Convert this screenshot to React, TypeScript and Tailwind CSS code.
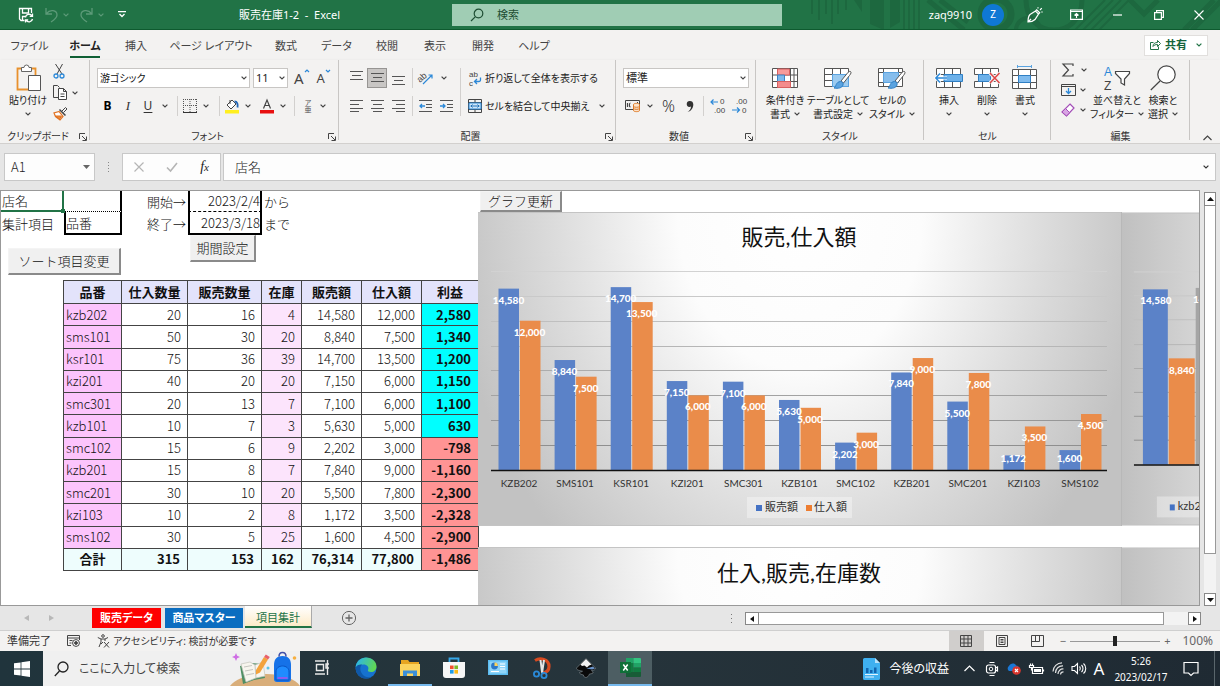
import React from "react";

type Kids = { children?: React.ReactNode };

function Icon({ w, h, className = "", children }: Kids & { w: number; h: number; className?: string }) {
  return (
    <svg width={w} height={h} viewBox={`0 0 ${w} ${h}`} fill="none" stroke="#444" strokeWidth="1" className={`shrink-0 overflow-visible ${className}`} aria-hidden="true">
      {children}
    </svg>
  );
}

function Chev({ className = "text-[#444]" }: { className?: string }) {
  return (
    <svg width="6" height="4" viewBox="0 0 6 4" fill="none" stroke="currentColor" strokeWidth="1.2" className={`shrink-0 ${className}`} aria-hidden="true">
      <path d="M.6.6 3 3 5.4.6" />
    </svg>
  );
}

function Slot({ w, label, children, on }: Kids & { w: string; label: string; on?: boolean }) {
  return (
    <button type="button" aria-label={label} className={`flex h-5 shrink-0 items-center justify-center ${w} ${on ? "border border-[#979593] bg-[#c8c6c4]" : ""}`}>
      {children}
    </button>
  );
}

function Sep({ w }: { w: string }) {
  return (
    <span className={`flex h-5 shrink-0 justify-center ${w}`}>
      <span className="h-full w-px bg-[#d2d0ce]" />
    </span>
  );
}

function Group({ w, title, launcher, children }: Kids & { w: string; title: string; launcher?: boolean }) {
  return (
    <section className={`relative flex shrink-0 flex-col ${w}`}>
      <div className="h-[69px]">{children}</div>
      <div className={`flex h-[14px] items-center justify-center text-[10px] leading-[14px] text-[#333] ${launcher ? "pr-[14px]" : ""}`}>{title}</div>
      {launcher && (
        <button type="button" aria-label={`${title}の設定`} className="absolute right-[3px] bottom-[2px]">
          <Icon w={8} h={8}>
            <path d="M.5 6V.5H6M3 3l4 4M7.500 3.500v4h-4" />
          </Icon>
        </button>
      )}
      <span className="absolute top-0 right-0 h-20 w-px bg-[#c8c6c4]" />
    </section>
  );
}

function Big({ w, icon, lines, chev }: { w: string; icon: React.ReactNode; lines: string[]; chev?: boolean }) {
  return (
    <button type="button" className={`flex shrink-0 flex-col items-center text-[10px] leading-[14px] text-[#222] ${w}`}>
      <span className="flex h-[30px] items-center justify-center">{icon}</span>
      <span className="whitespace-nowrap">{lines[0]}</span>
      {lines[1] ? (
        <span className="flex items-center gap-1 whitespace-nowrap">
          {lines[1]}
          <Chev />
        </span>
      ) : (
        chev && (
          <span className="flex h-[14px] items-center">
            <Chev />
          </span>
        )
      )}
    </button>
  );
}

/* ---------- title bar ---------- */

function TitleBar() {
  return (
    <header className="relative flex h-[30px] shrink-0 items-center overflow-hidden border-b border-[#0e5a2f] bg-[#217346] text-white">
      <svg className="absolute top-0 right-0 h-[30px] w-[420px]" viewBox="0 0 420 30" aria-hidden="true">
        <g fill="none" stroke="#1d683f" strokeWidth="2">
          <path d="M12 0v14M19 0v20M26 0v14M32 0v24M38 0v14M46 0v10" />
          <path d="M104 0v30M109 0v30M114 0v30M119 0v30" />
          <path d="M128 0l36 30M140 0l28 22" strokeWidth="5" />
          <circle cx="196" cy="14" r="15" strokeWidth="7" />
          <circle cx="228" cy="30" r="12" strokeWidth="4" />
          <path d="M275 30l30-30M283 30l30-30M291 30l30-30M299 30l30-30" />
          <path d="M226 0c0 40 56 40 56 0" strokeWidth="5" />
          <path d="M330 0l14 14 14-14M384 30l30-30M392 30l30-30" strokeWidth="5" />
        </g>
        <path d="M54 0h8v12zM70 0h14v30l-14-6zM90 0h10v22l-10 6z" fill="#1d683f" />
      </svg>
      <button type="button" aria-label="上書き保存" className="ml-[18px]">
        <Icon w={16} h={16}>
          <g stroke="#fff" strokeWidth="1.300">
            <path d="M6.500 13.500H3L1.500 12V1.500h12V6M4.500 1.500v4.500h6V1.500M4.500 13.500V9.500h2.500" />
            <path d="M7.500 10.500a3.500 3.500 0 0 1 6.500-1.500M14.500 6.500V9.300h-2.800M14.500 12a3.500 3.500 0 0 1-6.500 1M7.500 15.500v-2.700h2.700" />
          </g>
        </Icon>
      </button>
      <button type="button" aria-label="元に戻す" className="ml-[10px] flex items-center gap-1">
        <Icon w={15} h={16}>
          <path d="M2 1v6h6M2.500 6.500C6 2 13 3 13 8c0 3-3 5-6 7" stroke="#5c9a78" strokeWidth="1.300" />
        </Icon>
        <Chev className="text-[#5c9a78]" />
      </button>
      <button type="button" aria-label="やり直し" className="ml-[10px] flex items-center gap-1">
        <Icon w={15} h={16}>
          <path d="M13 1v6H7M12.500 6.500C9 2 2 3 2 8c0 3 3 5 6 7" stroke="#5c9a78" strokeWidth="1.300" />
        </Icon>
        <Chev className="text-[#5c9a78]" />
      </button>
      <button type="button" aria-label="クイック アクセス" className="ml-[14px]">
        <Icon w={8} h={7}>
          <path d="M0 .7h8M1.500 3 4 5.500 6.500 3" stroke="#fff" strokeWidth="1.300" />
        </Icon>
      </button>
      <h1 className="ml-[113px] w-[213px] text-[11px] leading-4 whitespace-pre">販売在庫1-2  -  Excel</h1>
      <label className="flex h-[22px] w-[330px] items-center gap-[13px] bg-[#a0cdb4] pl-[18px]">
        <Icon w={14} h={14}>
          <path d="M5.200 8.800 1 13" stroke="#1e4e33" strokeWidth="1.200" />
          <circle cx="8.500" cy="5.500" r="4.300" stroke="#1e4e33" strokeWidth="1.200" />
        </Icon>
        <input aria-label="検索" placeholder="検索" className="w-full bg-transparent text-[11px] leading-4 text-[#1e4e33] outline-none placeholder:text-[#1e4e33]" />
      </label>
      <div className="relative ml-auto flex items-center">
        <span className="mr-[10px] text-[11px] leading-4">zaq9910</span>
        <span className="flex size-[22px] items-center justify-center rounded-full bg-[#0f78d4] text-[10px]">Z</span>
        <button type="button" aria-label="描画" className="ml-[23px]">
          <Icon w={16} h={16}>
            <path d="M1 15c0-3.500.5-6 2-7.500L8.500 4l3 3L8 12.500C6.500 14 4 15 1 15zM1 15l3-3M8.500 4l1.200-1.200 3 3L11.500 7M11 1.500V.3M13 3l1.800-1.800M14.300 5h1.400" stroke="#fff" strokeWidth="1.200" />
          </Icon>
        </button>
        <button type="button" aria-label="リボンの表示オプション" className="ml-[27px]">
          <Icon w={13} h={11}>
            <path d="M.6 1h11.800v9.400H.6zM.6 2.500h11.800M6.500 9V5M4.500 6.500l2-2 2 2" stroke="#fff" strokeWidth="1.200" />
          </Icon>
        </button>
        <button type="button" aria-label="最小化" className="ml-[30px]">
          <Icon w={10} h={10}>
            <path d="M0 5h9" stroke="#fff" strokeWidth="1.200" />
          </Icon>
        </button>
        <button type="button" aria-label="元のサイズに戻す" className="ml-[31px]">
          <Icon w={10} h={10}>
            <path d="M.6 2.600h6.800v6.800H.6zM2.600 2.500V.6h6.800v6.800H7.500" stroke="#fff" strokeWidth="1.200" />
          </Icon>
        </button>
        <button type="button" aria-label="閉じる" className="mr-4 ml-[30px]">
          <Icon w={10} h={10}>
            <path d="m.5.500 9 9m0-9-9 9" stroke="#fff" strokeWidth="1.100" />
          </Icon>
        </button>
      </div>
    </header>
  );
}

const menu = [
  { t: "ファイル", w: "w-[33px]" },
  { t: "ホーム", w: "w-[30px]", on: true },
  { t: "挿入", w: "w-6" },
  { t: "ページ レイアウト", w: "w-[78px]" },
  { t: "数式", w: "w-6" },
  { t: "データ", w: "w-[29px]" },
  { t: "校閲", w: "w-6" },
  { t: "表示", w: "w-6" },
  { t: "開発", w: "w-6" },
  { t: "ヘルプ", w: "w-[30px]" },
];

function MenuTabs() {
  return (
    <nav className="flex h-[30px] shrink-0 items-center gap-6 pr-3 pl-[13px]">
      {menu.map((m) => (
        <button key={m.t} type="button" className={`flex h-[25px] shrink-0 justify-center pt-[5px] text-[11px] leading-4 whitespace-nowrap ${m.w} ${m.on ? "border-b-2 border-[#0f5f34] font-bold text-[#222]" : "border-b-2 border-transparent text-[#444]"}`}>
          {m.t}
        </button>
      ))}
      <button type="button" className="ml-auto flex h-[21px] items-center gap-1 border border-[#e1dfdd] bg-white px-[5px] text-[11px] leading-4 font-bold text-[#14633a]">
        <Icon w={11} h={10}>
          <path d="M3.500 2.500H.5v7h8v-3M3 6.500c0-3 2-4 4.500-4V.5l3 3-3 3v-2c-2 0-3.500.5-4.500 2z" stroke="#217346" />
        </Icon>
        共有
        <Chev className="ml-[5px] text-[#217346]" />
      </button>
    </nav>
  );
}

/* ---------- ribbon ---------- */

function Lines({ ys, xs }: { ys: number[]; xs: [number, number][] }) {
  return (
    <Icon w={13} h={14}>
      {ys.map((y, i) => (
        <path key={y} d={`M${xs[i][0]} ${y}.5H${xs[i][1]}`} stroke="#555" />
      ))}
    </Icon>
  );
}

const full: [number, number] = [0, 13];
const glyph = "font-['Liberation_Sans',sans-serif]";

function Brush() {
  return (
    <>
      <path d="M26.500 5.500c1 .8.500 2-1 4l-6 7.500-2.500-2 6.500-8c1.200-1.300 2.200-2 3-1.500z" fill="#fff" stroke="#555" />
      <path d="M16.500 15.500c2 .2 3 1.500 2.500 3.500-.8 3-5 3.800-9 3 2.500-1.500 1.500-6 6.500-6.500z" fill="#5aa3e0" stroke="#2f7fc4" />
    </>
  );
}

function Ribbon() {
  return (
    <div className="flex h-[84px] shrink-0 border-b border-[#d2d0ce] shadow-sm">
      <Group w="w-[90px]" title="クリップボード" launcher>
        <div className="flex gap-1 pl-[9px]">
          <button type="button" className="flex w-[38px] flex-col items-center pt-1 text-[10px] leading-4 whitespace-nowrap text-[#222]">
            <Icon w={25} h={28}>
              <path d="M5.500 4.500h-4v21H13M15.500 4.500h4V11" stroke="#e8912d" strokeWidth="1.800" />
              <path d="M5.500 3.500H8a2.500 2.500 0 0 1 5 0h2.500v4h-10z" fill="#fff" stroke="#666" />
              <path d="M12.500 11.500h12v15h-12z" fill="#fff" stroke="#555" />
            </Icon>
            貼り付け
            <Chev className="mt-1 text-[#444]" />
          </button>
          <div className="flex flex-col gap-[6px] pt-1 pl-[2px]">
            <button type="button" aria-label="切り取り">
              <Icon w={14} h={15}>
                <path d="M2.500 0 9 10M9.500 0 4 10" />
                <circle cx="3" cy="12" r="2" stroke="#2b88d8" strokeWidth="1.300" />
                <circle cx="9" cy="12" r="2" stroke="#2b88d8" strokeWidth="1.300" />
              </Icon>
            </button>
            <button type="button" aria-label="コピー" className="flex items-center gap-[5px]">
              <Icon w={14} h={15}>
                <path d="M5 12.500H.5v-12h4l2 2" />
                <path d="M5.500 3.500h5l3 3v8h-8zM10.500 3.500v3h3M7.500 9h4M7.500 11.500h4" fill="#fff" />
              </Icon>
              <Chev />
            </button>
            <button type="button" aria-label="書式のコピー">
              <Icon w={15} h={15}>
                <path d="m9 5 3.500-3.500 1.500 1.500L10.500 6.500" stroke="#444" />
                <path d="m6.500 3.500 6 6" strokeWidth="1.500" />
                <path d="M6 5.500 1 7l1.500 3.500L7 14l3-3.500z" fill="#fff" stroke="#e07020" strokeWidth="1.200" />
                <path d="m2.500 10 4 3 2-3z" fill="#ec8b3a" stroke="#e07020" />
              </Icon>
            </button>
          </div>
        </div>
      </Group>

      <Group w="w-[249px]" title="フォント" launcher>
        <div className="flex items-center pt-2 pl-[7px]">
          <button type="button" aria-label="フォント" className="flex h-5 w-[153px] items-center justify-between border border-[#c8c6c4] bg-white px-[2px] text-[10px] leading-4 text-[#111]">
            游ゴシック
            <Chev />
          </button>
          <button type="button" aria-label="フォント サイズ" className="ml-[3px] flex h-5 w-[35px] items-center justify-between border border-[#c8c6c4] bg-white px-[2px] text-[11px] leading-4 text-[#222]">
            11
            <Chev />
          </button>
          <button type="button" className="ml-[6px] flex text-[15px] leading-5 text-[#444]">
            A
            <Icon w={6} h={6}>
              <path d="M1 4 3 2l2 2" stroke="#2b88d8" strokeWidth="1.200" />
            </Icon>
          </button>
          <button type="button" className="ml-[7px] flex text-[13px] leading-5 text-[#444]">
            A
            <Icon w={6} h={6}>
              <path d="m1 2 2 2 2-2" stroke="#2b88d8" strokeWidth="1.200" />
            </Icon>
          </button>
        </div>
        <div className="flex items-center pt-2 pl-[7px] text-[12px] leading-4 text-[#333]">
          <Slot w="w-[21px]" label="太字"><b className="text-black">B</b></Slot>
          <Slot w="w-5" label="斜体"><i className="font-['Liberation_Serif',serif] text-[13px]">I</i></Slot>
          <Slot w="w-5" label="下線"><u className="underline-offset-2">U</u></Slot>
          <Slot w="w-[14px]" label="下線の種類"><Chev /></Slot>
          <Sep w="w-[10px]" />
          <Slot w="w-4" label="罫線">
            <Icon w={14} h={14}>
              <path d="M.5 0v13M13.500 0v13M0 .5h14M7 0v13M0 6.500h14" strokeDasharray="1 1" stroke="#555" />
              <path d="M0 13.500h14" stroke="#333" />
            </Icon>
          </Slot>
          <Slot w="w-4" label="罫線の種類"><Chev /></Slot>
          <Sep w="w-[10px]" />
          <Slot w="w-4" label="塗りつぶしの色">
            <Icon w={15} h={15}>
              <path d="M0 11h14v3.500H0z" fill="#ffef1f" stroke="none" />
              <path d="M7 1 2 6l4 4 5-5L7 1zM5 1v4" fill="#fff" />
              <path d="M9.500 2.500c3 0 3.500 3 3 6" stroke="#2266b8" strokeWidth="1.800" />
            </Icon>
          </Slot>
          <Slot w="w-4" label="塗りつぶしの色の種類"><Chev /></Slot>
          <Slot w="w-[22px]" label="フォントの色">
            <Icon w={15} h={15}>
              <path d="M0 11h14v3.500H0z" fill="#e81010" stroke="none" />
              <path d="M3.500 9.500 7 1l3.500 8.500M4.800 6.500h4.400" strokeWidth="1.200" />
            </Icon>
          </Slot>
          <Slot w="w-[10px]" label="フォントの色の種類"><Chev /></Slot>
          <Sep w="w-3" />
          <Slot w="w-4" label="ふりがな">
            <span className="flex flex-col items-center text-[7px] leading-[7px] text-[#555]">
              <span>ア</span>
              <span>亜</span>
            </span>
          </Slot>
          <Slot w="w-[14px]" label="ふりがなの設定"><Chev /></Slot>
        </div>
      </Group>

      <Group w="w-[277px]" title="配置" launcher>
        <div className="flex pt-2">
          <div className="flex w-[122px] flex-col gap-2 border-r border-[#d2d0ce] pl-[6px]">
            <div className="flex items-center">
              <Slot w="w-[22px]" label="上揃え"><Lines ys={[0, 4, 8]} xs={[full, [2, 11], full]} /></Slot>
              <Slot w="w-5" label="上下中央揃え" on><Lines ys={[2, 6, 10]} xs={[full, [2, 11], full]} /></Slot>
              <Slot w="w-[22px]" label="下揃え"><Lines ys={[5, 9, 13]} xs={[full, [2, 11], full]} /></Slot>
              <Sep w="w-[6px]" />
              <Slot w="w-[22px]" label="方向">
                <Icon w={16} h={14}>
                  <text x="0" y="9" fontSize="9" fill="#444" stroke="none" className={glyph} transform="rotate(-42 5 8)">ab</text>
                  <path d="M5 13 14 4M10.500 4H14v3.500" stroke="#2b88d8" strokeWidth="1.200" />
                </Icon>
              </Slot>
              <Slot w="w-[14px]" label="方向の種類"><Chev /></Slot>
            </div>
            <div className="flex items-center">
              <Slot w="w-[22px]" label="左揃え"><Lines ys={[1, 5, 9, 12]} xs={[full, [0, 9], full, [0, 9]]} /></Slot>
              <Slot w="w-5" label="中央揃え"><Lines ys={[1, 5, 9, 12]} xs={[full, [2, 11], full, [2, 11]]} /></Slot>
              <Slot w="w-[22px]" label="右揃え"><Lines ys={[1, 5, 9, 12]} xs={[full, [4, 13], full, [4, 13]]} /></Slot>
              <Sep w="w-[6px]" />
              <Slot w="w-[22px]" label="インデントを減らす">
                <Icon w={14} h={14}>
                  <path d="M0 1.500h13M7 5.500h6M7 8.500h6M0 12.500h13" stroke="#555" />
                  <path d="M6 7H1M3 5 1 7l2 2" stroke="#2b88d8" strokeWidth="1.300" />
                </Icon>
              </Slot>
              <Slot w="w-5" label="インデントを増やす">
                <Icon w={14} h={14}>
                  <path d="M0 1.500h13M7 5.500h6M7 8.500h6M0 12.500h13" stroke="#555" />
                  <path d="M0 7h5M3 5l2 2-2 2" stroke="#2b88d8" strokeWidth="1.300" />
                </Icon>
              </Slot>
            </div>
          </div>
          <div className="flex flex-col gap-2 pl-[7px] text-[10px] leading-4 whitespace-nowrap text-[#222]">
            <button type="button" className="flex h-5 items-center gap-[3px]">
              <Icon w={14} h={16}>
                <text x="1" y="7" fontSize="8" fill="#444" stroke="none" className={glyph}>ab</text>
                <text x="1" y="16" fontSize="8" fill="#444" stroke="none" className={glyph}>c</text>
                <path d="M12.500 7.500V10a1.500 1.500 0 0 1-1.500 1.500H6.500M9 9l-2.500 2.500L9 14" stroke="#2b88d8" strokeWidth="1.300" />
              </Icon>
              折り返して全体を表示する
            </button>
            <button type="button" className="flex h-5 items-center gap-[3px]">
              <Icon w={14} h={14}>
                <path d="M.5.500h13v13H.5zM.5 3.500h13M.5 10.500h13M7 .5v3M7 10.500v3" stroke="#444" />
                <path d="M1 4h12v6H1z" fill="#cfe6f8" stroke="#2b88d8" />
                <path d="M2.500 7h9M4.500 5.500 3 7l1.500 1.500M9.500 5.500 11 7 9.500 8.500" stroke="#2070b8" />
              </Icon>
              セルを結合して中央揃え
              <Chev className="ml-[6px] text-[#444]" />
            </button>
          </div>
        </div>
      </Group>

      <Group w="w-[140px]" title="数値" launcher>
        <div className="pt-2 pl-[7px]">
          <button type="button" aria-label="表示形式" className="flex h-5 w-[126px] items-center justify-between border border-[#c8c6c4] bg-white px-[2px] text-[11px] leading-4 text-[#222]">
            標準
            <Chev />
          </button>
        </div>
        <div className="flex items-center pt-2 pl-[7px]">
          <Slot w="w-5" label="通貨表示形式">
            <Icon w={16} h={14}>
              <path d="M.5 1.500h14v9H.5z" />
              <path d="M2.500 4v4M5.500 4C4 4 4 8 5.500 8M12 3.500h1" strokeWidth="1.200" />
              <path d="M8.500 5.500c0-1.500 6-1.500 6 0v6c0 1.500-6 1.500-6 0zM8.500 7.500c1 1 5 1 6 0M8.500 9.500c1 1 5 1 6 0" fill="#fde3c8" stroke="#e07a26" />
            </Icon>
          </Slot>
          <Slot w="w-[14px]" label="通貨の種類"><Chev /></Slot>
          <Slot w="w-[23px]" label="パーセント"><span className="text-[16px] leading-5 font-light text-[#333]">%</span></Slot>
          <Slot w="w-[20px]" label="桁区切り">
            <Icon w={8} h={13}>
              <path d="M4 1a3 3 0 0 0-.5 6c.8 0 1.200-.2 1.500-.5C5 9 3.500 11 1.500 12c4-.8 5.800-4.500 5.800-7.500C7.300 2 5.800 1 4 1z" fill="#333" stroke="none" />
            </Icon>
          </Slot>
          <Sep w="w-[6px]" />
          <Slot w="w-[22px]" label="小数点以下を増やす">
            <Icon w={15} h={16}>
              <text x="10" y="6" fontSize="8" fill="#444" stroke="none" className={glyph}>0</text>
              <text x="4" y="15" fontSize="8" fill="#444" stroke="none" className={glyph}>.00</text>
              <path d="M8 4H1M3.500 1.500 1 4l2.500 2.500" stroke="#2b88d8" strokeWidth="1.200" />
            </Icon>
          </Slot>
          <Slot w="w-[22px]" label="小数点以下を減らす">
            <Icon w={15} h={16}>
              <text x="4" y="6" fontSize="8" fill="#444" stroke="none" className={glyph}>.00</text>
              <text x="10" y="15" fontSize="8" fill="#444" stroke="none" className={glyph}>0</text>
              <path d="M0 12h7.500M5 9.500 7.500 12 5 14.500" stroke="#2b88d8" strokeWidth="1.200" />
            </Icon>
          </Slot>
        </div>
      </Group>

      <Group w="w-[168px]" title="スタイル">
        <div className="flex pt-[3px] pl-[7px]">
          <Big
            w="w-11"
            lines={["条件付き", "書式"]}
            icon={
              <Icon w={26} h={22}>
                <path d="M.5 1.500h25v19H.5zM5.500 1.500v19M18.500 1.500v19M.5 8h25M.5 14.500h25M22 1.500v19" fill="#fff" stroke="#555" />
                <path d="M5.500 2h12v6h-12z" fill="#f79a9a" stroke="#d86060" />
                <path d="M5.500 8h7v6.500h-7z" fill="#7db8ea" stroke="#3a82c4" />
                <path d="M5.500 14.500h13v6h-13z" fill="#f48c8c" stroke="#d86060" />
              </Icon>
            }
          />
          <Big
            w="w-[62px]"
            lines={["テーブルとして", "書式設定"]}
            icon={
              <Icon w={28} h={24}>
                <path d="M.5 2.500h24v18H.5zM8.500 2.500v18M16.500 2.500v18M.5 8.500h24M.5 14.500h24" fill="#fff" stroke="#555" />
                <path d="M8.500 8.500h16v12h-16z" fill="#9ccbf0" stroke="#5aa3e0" />
                <Brush />
              </Icon>
            }
          />
          <Big
            w="w-[46px]"
            lines={["セルの", "スタイル"]}
            icon={
              <Icon w={28} h={24}>
                <path d="M.5 2.500h24v18H.5zM5.500 2.500v18M20.500 2.500v4M.5 6.500h24M.5 16.500h6" fill="#fff" stroke="#555" />
                <path d="M5.500 6.500h15v10h-15z" fill="#86bdec" stroke="#5aa3e0" />
                <Brush />
              </Icon>
            }
          />
        </div>
      </Group>

      <Group w="w-[127px]" title="セル">
        <div className="flex pt-[3px] pl-[6px]">
          <Big
            w="w-[38px]"
            lines={["挿入"]}
            chev
            icon={
              <Icon w={28} h={22}>
                <path d="M1.500 1.500h24v19h-24zM9.500 1.500v19M17.500 1.500v19M1.500 7.500h24M1.500 14.500h24" fill="#fff" stroke="#555" />
                <path d="M9 7.500h18.500v7H9z" fill="#6db1ea" stroke="#2f7fc4" />
                <path d="M12 11H1M5 6.500.8 11 5 15.500" stroke="#fff" strokeWidth="3" />
                <path d="M12 11H1M5 6.500.8 11 5 15.500" stroke="#2b88d8" strokeWidth="1.400" />
              </Icon>
            }
          />
          <Big
            w="w-[38px]"
            lines={["削除"]}
            chev
            icon={
              <Icon w={28} h={22}>
                <path d="M1.500 1.500h24v6h-24zM1.500 14.500h24v6h-24zM9.500 1.500v6M17.500 1.500v6M9.500 14.500v6M17.500 14.500v6" fill="#fff" stroke="#555" />
                <path d="M5.500 7.500h12v7h-12z" fill="#6db1ea" stroke="#2f7fc4" />
                <path d="m17 6 9.500 10m0-10L17 16" stroke="#f3f2f1" strokeWidth="3.500" />
                <path d="m17 6 9.500 10m0-10L17 16" stroke="#e04646" strokeWidth="1.500" />
              </Icon>
            }
          />
          <Big
            w="w-[38px]"
            lines={["書式"]}
            chev
            icon={
              <Icon w={26} h={26}>
                <path d="M5.500 0v3M19.500 0v3M5.500 1.500h14" stroke="#5aa3e0" />
                <path d="M.5 4.500h24v19H.5zM6.500 4.500v19M18.500 4.500v19M.5 10.500h24M.5 17.500h24" fill="#fff" stroke="#555" />
                <path d="M6.500 10.500h12v7h-12z" fill="#7fbbee" stroke="#2f7fc4" />
              </Icon>
            }
          />
        </div>
      </Group>

      <Group w="w-[139px]" title="編集">
        <div className="flex">
          <div className="flex w-[41px] flex-col pl-[10px]">
            <button type="button" aria-label="オート SUM" className="flex h-5 items-center gap-[6px]">
              <Icon w={14} h={14}>
                <path d="M12 3V1H2l5.500 6L2 13h10v-2" strokeWidth="1.200" />
              </Icon>
              <Chev />
            </button>
            <button type="button" aria-label="フィル" className="flex h-5 items-center gap-[4px]">
              <Icon w={15} h={12}>
                <path d="M.5.500h14v11H.5zM.5 2.500h14" />
                <path d="M7.500 4v5.500M5 7l2.500 2.500L10 7" stroke="#2b88d8" strokeWidth="1.300" />
              </Icon>
              <Chev />
            </button>
            <button type="button" aria-label="クリア" className="flex h-5 items-center gap-[5px]">
              <Icon w={14} h={14}>
                <path d="m9 1 4 4-7.500 8L1 9z" fill="#fff" stroke="#a44fb8" strokeWidth="1.200" />
                <path d="m4.500 5.500 4.200 4.200L5.500 13 1 9z" fill="#d9a5e4" stroke="#a44fb8" />
              </Icon>
              <Chev />
            </button>
          </div>
          <div className="flex pt-[3px]">
            <Big
              w="w-[50px]"
              lines={["並べ替えと", "フィルター"]}
              icon={
                <Icon w={26} h={26}>
                  <text x="0" y="11" fontSize="12" fill="#2b88d8" stroke="none" className={glyph}>A</text>
                  <text x="0" y="25" fontSize="12" fill="#444" stroke="none" className={glyph}>Z</text>
                  <path d="M11.500 6.500h14v2l-5 5.500v6l-3.500-2v-4l-5.500-5.500z" fill="#fff" strokeWidth="1.200" />
                </Icon>
              }
            />
            <Big
              w="w-[42px]"
              lines={["検索と", "選択"]}
              icon={
                <Icon w={26} h={26}>
                  <path d="M10 16 .8 25" strokeWidth="1.200" />
                  <circle cx="16.500" cy="9.500" r="8.700" fill="#fff" strokeWidth="1.200" />
                </Icon>
              }
            />
          </div>
        </div>
      </Group>
      <button type="button" aria-label="リボンを折りたたむ" className="mr-2 mb-[2px] ml-auto self-end">
        <Icon w={9} h={6}>
          <path d="M.5 5 4.500 1l4 4" strokeWidth="1.200" />
        </Icon>
      </button>
    </div>
  );
}

/* ---------- formula bar ---------- */

function FormulaBar() {
  return (
    <div className="flex h-[46px] shrink-0 items-center bg-[#e6e6e6] pr-1 pb-[1px] pl-1">
      <button type="button" aria-label="名前ボックス" className="flex h-7 w-[91px] items-center justify-between border border-[#c8c8c8] bg-[#fdfdfd] pr-1 pl-[6px] font-['Noto_Sans_CJK_JP',sans-serif] text-[13px] leading-4 font-light text-[#222]">
        A1
        <Icon w={7} h={4}>
          <path d="M0 0h7L3.500 4z" fill="#666" stroke="none" />
        </Icon>
      </button>
      <span className="flex w-[27px] flex-col items-center gap-[2px]">
        <i className="size-px bg-[#888]" />
        <i className="size-px bg-[#888]" />
        <i className="size-px bg-[#888]" />
        <i className="size-px bg-[#888]" />
      </span>
      <div className="flex h-7 w-[99px] items-center justify-around border border-[#c8c8c8] bg-[#fdfdfd]">
        <button type="button" aria-label="キャンセル">
          <Icon w={10} h={10}>
            <path d="m.5.500 9 9m0-9-9 9" stroke="#b5b5b5" strokeWidth="1.200" />
          </Icon>
        </button>
        <button type="button" aria-label="入力">
          <Icon w={12} h={10}>
            <path d="m1 5.500 3.500 3.500L11 1" stroke="#b5b5b5" strokeWidth="1.600" />
          </Icon>
        </button>
        <button type="button" className="font-['Liberation_Serif',serif] text-[14px] leading-4 text-[#222] italic">
          f<span className="text-[11px]">x</span>
        </button>
      </div>
      <label className="ml-[2px] flex h-7 flex-1 items-center border border-[#c8c8c8] bg-[#fdfdfd] pr-[6px] pl-[11px]">
        <input aria-label="数式バー" defaultValue="店名" className="w-full bg-transparent text-[13px] leading-4 font-light text-[#222] outline-none" />
        <Chev className="text-[#333]" />
      </label>
    </div>
  );
}

/* ---------- worksheet ---------- */

const rows: string[][] = [
  ["kzb202", "20", "16", "4", "14,580", "12,000", "2,580"],
  ["sms101", "50", "30", "20", "8,840", "7,500", "1,340"],
  ["ksr101", "75", "36", "39", "14,700", "13,500", "1,200"],
  ["kzi201", "40", "20", "20", "7,150", "6,000", "1,150"],
  ["smc301", "20", "13", "7", "7,100", "6,000", "1,100"],
  ["kzb101", "10", "7", "3", "5,630", "5,000", "630"],
  ["smc102", "15", "6", "9", "2,202", "3,000", "-798"],
  ["kzb201", "15", "8", "7", "7,840", "9,000", "-1,160"],
  ["smc201", "30", "10", "20", "5,500", "7,800", "-2,300"],
  ["kzi103", "10", "2", "8", "1,172", "3,500", "-2,328"],
  ["sms102", "30", "5", "25", "1,600", "4,500", "-2,900"],
];

const profit = (v: string) => (v.startsWith("-") ? "bg-[#ff9494]" : "bg-[#00ffff]");

function SheetButton({ pos, children }: Kids & { pos: string }) {
  return (
    <button type="button" className={`absolute flex items-center justify-center border-t border-r-2 border-b-2 border-l border-t-[#f4f4f4] border-r-[#8a8a8a] border-b-[#8a8a8a] border-l-[#f4f4f4] bg-[#f0f0f0] font-['Noto_Sans_CJK_JP',sans-serif] text-[13px] leading-4 font-light whitespace-nowrap text-[#111] [font-feature-settings:normal] ${pos}`}>
      {children}
    </button>
  );
}

function SheetCells() {
  const cell = "border border-[#444] px-[6px] py-0 text-right font-light text-[#111]";
  const top = "flex items-center whitespace-nowrap";
  return (
    <div className="relative w-[478px] shrink-0 border-l border-[#999] font-['Noto_Sans_CJK_JP',sans-serif] text-[13px] leading-4 font-light text-[#111] [font-feature-settings:normal]">
      <div className="grid grid-cols-[63px_58px_66px_74px_1fr] grid-rows-[21px_23px]">
        <div className={`relative border-2 border-t-0 border-l-0 border-[#217346] pl-px ${top}`}>
          店名
          <i className="absolute -right-[3px] -bottom-[3px] size-1 bg-[#217346]" />
        </div>
        <div className="border-r-2 border-b border-black [border-bottom-style:dotted]" />
        <div className={`justify-end pr-[2px] ${top}`}>開始→</div>
        <div className={`justify-end border-x-2 border-b border-black [border-bottom-style:dashed] ${top}`}>2023/2/4</div>
        <div className={`pl-[2px] ${top}`}>から</div>
        <div className={`pl-px ${top}`}>集計項目</div>
        <div className={`border-2 border-t-0 border-black ${top}`}>品番</div>
        <div className={`justify-end pr-[2px] ${top}`}>終了→</div>
        <div className={`justify-end border-2 border-t-0 border-black ${top}`}>2023/3/18</div>
        <div className={`pl-[2px] ${top}`}>まで</div>
      </div>
      <SheetButton pos="top-[44px] left-[189px] h-[27px] w-[66px]">期間設定</SheetButton>
      <SheetButton pos="top-[57px] left-[7px] h-[27px] w-[113px]">ソート項目変更</SheetButton>
      <table className="mt-[45px] ml-[62px] h-[291px] w-[416px] table-fixed border-collapse">
        <colgroup>
          <col className="w-[58px]" />
          <col className="w-[66px]" />
          <col className="w-[74px]" />
          <col className="w-10" />
          <col className="w-[60px]" />
          <col className="w-[60px]" />
          <col className="w-[57px]" />
        </colgroup>
        <thead>
          <tr className="h-[23px] bg-[#e3e3fb]">
            {["品番", "仕入数量", "販売数量", "在庫", "販売額", "仕入額", "利益"].map((h) => (
              <th key={h} className="border border-[#444] p-0 font-bold whitespace-nowrap text-[#111]">{h}</th>
            ))}
          </tr>
        </thead>
        <tbody>
          {rows.map((r) => (
            <tr key={r[0]}>
              <td className="border border-[#444] bg-[#fcc4fc] px-[2px] py-0 text-left font-light text-[#111]">{r[0]}</td>
              <td className={cell}>{r[1]}</td>
              <td className={cell}>{r[2]}</td>
              <td className={`${cell} bg-[#fce4fc]`}>{r[3]}</td>
              <td className={cell}>{r[4]}</td>
              <td className={cell}>{r[5]}</td>
              <td className={`border border-[#444] px-[7px] py-0 text-right font-bold text-[#111] ${profit(r[6])}`}>{r[6]}</td>
            </tr>
          ))}
          <tr className="bg-[#eefdfd] font-bold text-[#111]">
            <td className="border border-[#444] p-0 text-center">合計</td>
            {["315", "153", "162", "76,314", "77,800"].map((v) => (
              <td key={v} className="border border-[#444] px-[7px] py-0 text-right">{v}</td>
            ))}
            <td className="border border-[#444] bg-[#ff9494] px-[7px] py-0 text-right">-1,486</td>
          </tr>
        </tbody>
      </table>
    </div>
  );
}

const num = (s: string) => Number(s.replace(",", ""));

function ChartDefs() {
  return (
    <svg className="absolute size-0" aria-hidden="true">
      <defs>
        <radialGradient id="chartFill" gradientUnits="userSpaceOnUse" cx="0" cy="0" r="1" gradientTransform="translate(322 0) scale(350 450)">
          <stop offset="0" stopColor="#ffffff" />
          <stop offset=".35" stopColor="#fcfcfc" />
          <stop offset=".7" stopColor="#dcdcdc" />
          <stop offset="1" stopColor="#c2c2c2" />
        </radialGradient>
        <linearGradient id="nextFill" x1="0" x2=".4" y1="0" y2="0">
          <stop offset="0" stopColor="#c0c0c0" />
          <stop offset="1" stopColor="#dadada" />
        </linearGradient>
      </defs>
    </svg>
  );
}

const gridTone = ["#8f8f8f", "#979797", "#a2a2a2", "#acacac", "#b6b6b6", "#bfbfbf", "#c9c9c9", "#d2d2d2"];

function Bar({ x, w, base, v, scale, fill }: { x: number; w: number; base: number; v: string; scale: number; fill: string }) {
  const h = num(v) * scale;
  return <rect x={x} y={base - h} width={w} height={h} fill={fill} />;
}

function SalesChart() {
  return (
    <svg width="643" height="314" viewBox="0 0 643 314" className="shrink-0 font-[Lato,'Noto_Sans_CJK_JP',sans-serif]" role="img" aria-label="販売,仕入額">
      <rect width="643" height="314" fill="url(#chartFill)" />
      <path d="M0 .5h643M0 313.500h643" stroke="#c4c4c4" />
      <text x="321" y="33" textAnchor="middle" fontSize="22" fill="#111">販売,仕入額</text>
      {gridTone.map((c, i) => (
        <path key={c} d={`M13 ${Math.round(258 - 24.9 * (i + 1))}.5H629`} stroke={c} />
      ))}
      {rows.map((r, i) => (
        <g key={r[0]}>
          <Bar x={20.5 + 56.1 * i} w={20.5} base={258} v={r[4]} scale={0.01244} fill="#5b82c8" />
          <Bar x={42 + 56.1 * i} w={20.5} base={258} v={r[5]} scale={0.01244} fill="#ea8c4a" />
        </g>
      ))}
      <path d="M13 258.500h616" stroke="#111" strokeWidth="1.500" />
      {rows.map((r, i) => (
        <g key={r[0]} textAnchor="middle" fontSize="10">
          <text x={30.5 + 56.1 * i} y={Math.min(258 - num(r[4]) * 0.01244 + 15, 250)} fontWeight="900" fill="#fff">{r[4]}</text>
          <text x={51.5 + 56.1 * i} y={Math.min(258 - num(r[5]) * 0.01244 + 15, 250)} fontWeight="900" fill="#fff">{r[5]}</text>
          <text x={41 + 56.1 * i} y="275" fill="#333">{r[0].toUpperCase()}</text>
        </g>
      ))}
      <rect x="269" y="285" width="105" height="21" fill="#fff" fillOpacity=".35" />
      <rect x="278" y="293" width="6" height="6" fill="#4472c4" />
      <text x="287" y="299" fontSize="11" fill="#333">販売額</text>
      <rect x="328" y="293" width="6" height="6" fill="#ed7d31" />
      <text x="336" y="299" fontSize="11" fill="#333">仕入額</text>
    </svg>
  );
}

function NextChart() {
  return (
    <svg width="240" height="314" viewBox="0 0 240 314" className="shrink-0 border-l border-[#b8b8b8] font-[Lato,'Noto_Sans_CJK_JP',sans-serif]" role="img" aria-label="品番別">
      <rect width="240" height="314" fill="url(#nextFill)" />
      <path d="M0 .5h240M0 313.500h240" stroke="#c4c4c4" />
      {gridTone.map((c, i) => (
        <path key={c} d={`M12 ${Math.round(252 - 24.1 * (i + 1))}.5H240`} stroke={c} />
      ))}
      <Bar x={21} w={25} base={253} v="14,580" scale={0.01207} fill="#5b82c8" />
      <Bar x={47} w={26} base={253} v="8,840" scale={0.01207} fill="#ea8c4a" />
      <Bar x={74} w={26} base={253} v="14,700" scale={0.01207} fill="#a5a5a5" />
      <path d="M12 253.500h228" stroke="#111" strokeWidth="1.500" />
      <g textAnchor="middle" fontSize="10" fontWeight="900" fill="#fff">
        <text x="34" y="92">14,580</text>
        <text x="60" y="162">8,840</text>
        <text x="87" y="91">14,700</text>
      </g>
      <rect x="35" y="285" width="205" height="21" fill="#fff" fillOpacity=".35" />
      <rect x="48" y="293" width="5" height="6" fill="#4472c4" />
      <text x="56" y="299" fontSize="11" fill="#333">kzb202</text>
    </svg>
  );
}

function Worksheet() {
  return (
    <div className="flex min-h-0 flex-1 bg-[#e6e6e6]">
      <main className="flex min-w-0 flex-1 overflow-hidden border-t border-r border-b border-[#999] bg-white">
        <SheetCells />
        <div className="relative flex min-w-0 flex-1 flex-col overflow-hidden">
          <ChartDefs />
          <div className="h-[21px] shrink-0">
            <SheetButton pos="top-0 left-[2px] h-[21px] w-[82px]">グラフ更新</SheetButton>
          </div>
          <div className="flex shrink-0">
            <SalesChart />
            <NextChart />
          </div>
          <div className="mt-[21px] flex shrink-0">
            <svg width="643" height="314" viewBox="0 0 643 314" className="shrink-0 font-[Lato,'Noto_Sans_CJK_JP',sans-serif]" role="img" aria-label="仕入,販売,在庫数">
              <rect width="643" height="314" fill="url(#chartFill)" />
              <path d="M0 .5h643" stroke="#c4c4c4" />
              <text x="321" y="34" textAnchor="middle" fontSize="22" fill="#111">仕入,販売,在庫数</text>
            </svg>
            <svg width="240" height="314" viewBox="0 0 240 314" className="shrink-0 border-l border-[#b8b8b8]" aria-hidden="true">
              <rect width="240" height="314" fill="url(#nextFill)" />
              <path d="M0 .5h240" stroke="#c4c4c4" />
            </svg>
          </div>
        </div>
      </main>
      <div className="mr-1 ml-1 flex w-3 shrink-0 flex-col pt-[2px]">
        <button type="button" aria-label="上へスクロール" className="flex h-[14px] items-center justify-center border border-[#888] bg-white">
          <Icon w={7} h={4}><path d="M0 4h7L3.500 0z" fill="#111" stroke="none" /></Icon>
        </button>
        <div className="flex flex-1 flex-col bg-[#f3f3f3]">
          <div className="h-9/10 border border-t-0 border-[#999] bg-white" />
        </div>
        <button type="button" aria-label="下へスクロール" className="flex h-[13px] items-center justify-center border border-[#888] bg-white">
          <Icon w={7} h={4}><path d="M0 0h7L3.500 4z" fill="#111" stroke="none" /></Icon>
        </button>
      </div>
    </div>
  );
}

function SheetTabs() {
  const tab = "flex shrink-0 items-center justify-center text-[11px] leading-4 whitespace-nowrap";
  return (
    <div className="flex h-[25px] shrink-0 items-start border-b border-[#cfcfcf] bg-[#e6e6e6]">
      <button type="button" aria-label="前のシート" className="mt-[9px] ml-6">
        <Icon w={5} h={6}><path d="M5 0v6L0 3z" fill="#b8b8b8" stroke="none" /></Icon>
      </button>
      <button type="button" aria-label="次のシート" className="mt-[9px] ml-5">
        <Icon w={5} h={6}><path d="M0 0v6l5-3z" fill="#b8b8b8" stroke="none" /></Icon>
      </button>
      <button type="button" className={`${tab} mt-[2px] ml-[38px] h-[20px] w-[69px] bg-[#fe0000] font-bold text-white`}>販売データ</button>
      <button type="button" className={`${tab} mt-[2px] ml-1 h-[20px] w-[78px] bg-[#0b6dc0] font-bold text-white`}>商品マスター</button>
      <button type="button" className={`${tab} ml-[2px] h-[22px] w-[67px] border-r border-b-2 border-r-[#aaa] border-b-[#217346] bg-linear-to-b from-white to-[#fdebc8] pt-[3px] text-[#217346]`}>項目集計</button>
      <button type="button" aria-label="新しいシート" className="mt-1 ml-[29px]">
        <Icon w={16} h={16}>
          <circle cx="8" cy="8" r="6.600" stroke="#666" />
          <path d="M8 4.500v7M4.500 8h7" stroke="#666" strokeWidth="1.300" />
        </Icon>
      </button>
      <div className="mt-[6px] mr-[19px] ml-auto flex w-[470px] items-center">
        <span className="mr-[13px] flex flex-col gap-[3px]">
          <i className="size-px bg-[#777]" />
          <i className="size-px bg-[#777]" />
          <i className="size-px bg-[#777]" />
        </span>
        <button type="button" aria-label="左へスクロール" className="flex h-[13px] w-[14px] items-center justify-center border border-[#888] bg-white">
          <Icon w={4} h={6}><path d="M4 0v6L0 3z" fill="#111" stroke="none" /></Icon>
        </button>
        <div className="h-[13px] flex-1 border border-l-0 border-[#999] bg-white" />
        <div className="h-[13px] w-6 bg-[#f3f3f3]" />
        <button type="button" aria-label="右へスクロール" className="flex h-[13px] w-[13px] items-center justify-center border border-[#888] bg-white">
          <Icon w={4} h={6}><path d="M0 0v6l4-3z" fill="#111" stroke="none" /></Icon>
        </button>
      </div>
    </div>
  );
}

function StatusBar() {
  return (
    <footer className="flex h-5 shrink-0 items-center px-[7px] text-[11px] leading-4 text-[#333]">
      <span>準備完了</span>
      <Icon w={14} h={12} className="ml-4">
        <path d="M4 10.500H.5V.5h12V5M.5 3h12M2.500 5.500h3M2.500 8h2" />
        <circle cx="9" cy="8" r="3.400" fill="#fff" />
        <circle cx="9" cy="8" r="1.400" fill="#444" />
      </Icon>
      <Icon w={14} h={14} className="ml-4">
        <circle cx="6" cy="2" r="1.300" />
        <path d="M.8 3.500 4 5v3l-2 5M4 5h4l3-1.500M8 5v2M4 10l2-2M7 8l5 5.500M12 8l-5 5.500" />
      </Icon>
      <span className="ml-[2px] text-[10px]">アクセシビリティ: 検討が必要です</span>
      <div className="ml-auto flex h-full items-center">
        <button type="button" aria-label="標準" className="flex h-full w-[35px] items-center justify-center bg-[#d0cecc]">
          <Icon w={12} h={12}><path d="M.5.500h11v11H.5zM4 .5v11M8 .5v11M.5 4h11M.5 8h11" /></Icon>
        </button>
        <button type="button" aria-label="ページ レイアウト" className="flex w-9 items-center justify-center">
          <Icon w={12} h={12}><path d="M.5.500h11v11H.5zM3 2.500h6v7H3zM4.500 4.500h3M4.500 6h3M4.500 7.500h3" /></Icon>
        </button>
        <button type="button" aria-label="改ページ プレビュー" className="flex w-9 items-center justify-center">
          <Icon w={13} h={12}><path d="M.5.500h12v11H.5zM4.500.5v6M8.500.5v6M.5 6.500h8" /></Icon>
        </button>
        <span className="ml-1 text-[#666]">−</span>
        <div className="relative mx-1 flex h-3 w-[90px] items-center">
          <span className="h-px w-full bg-[#999]" />
          <span className="absolute left-[43px] h-[10px] w-1 bg-[#222]" />
        </div>
        <span className="text-[#666]">+</span>
        <span className="ml-3 text-[12px] text-[#666]">100%</span>
      </div>
    </footer>
  );
}

/* ---------- taskbar ---------- */

function Task({ label, open, active, children }: Kids & { label: string; open?: boolean; active?: boolean }) {
  return (
    <button type="button" aria-label={label} className={`flex h-full w-11 shrink-0 items-center justify-center border-b-2 ${active ? "bg-[#4d5e63]" : ""} ${open || active ? "border-[#76b9ed]" : "border-transparent"}`}>
      {children}
    </button>
  );
}

function Taskbar() {
  return (
    <div className="flex h-[35px] shrink-0 items-center bg-linear-to-r from-[#20343c] via-[#26343b] to-[#1f2a33] text-white">
      <button type="button" aria-label="スタート" className="flex h-full w-[43px] shrink-0 items-center justify-center">
        <svg width="16" height="16" viewBox="0 0 16 16" fill="#fff" aria-hidden="true">
          <path d="M0 2.300 6.600 1.400v6.200H0zM7.400 1.300 16 0v7.600H7.400zM0 8.400h6.600v6.200L0 13.700zM7.400 8.400H16V16l-8.600-1.300z" />
        </svg>
      </button>
      <label className="relative flex h-full w-[257px] shrink-0 items-center gap-[10px] bg-[#f0f0f0] pl-[11px]">
        <Icon w={15} h={16}>
          <path d="M5.500 10 .8 15" stroke="#222" strokeWidth="1.300" />
          <circle cx="9" cy="6" r="5" stroke="#222" strokeWidth="1.300" />
        </Icon>
        <input aria-label="検索ボックス" placeholder="ここに入力して検索" className="w-[120px] bg-transparent text-[12px] leading-4 outline-none placeholder:text-[#444]" />
        <svg width="70" height="35" viewBox="0 0 70 35" className="absolute right-0 bottom-0" aria-hidden="true">
          <path d="M0 35c6-8 20-12 36-12s30 5 34 12z" fill="#d9ae7a" />
          <path d="m10 15 12-3 10 1 3 14-11 2-11 4z" fill="#4f8f63" />
          <path d="m11 13 9-2 5 3 8-3 2 14-9 2-10 4z" fill="#f7f5ee" stroke="#c4c4bc" strokeWidth=".7" />
          <path d="m25 14 1 13M14 16l8-1.500M15 20l8-1.500M16 24l8-1.500" stroke="#b9b9b3" strokeWidth=".8" fill="none" />
          <path d="m26 19 8-13 4 2.500-8 13-4 2z" fill="#f3a33c" />
          <path d="m34 6 1.800-2.500 4 2.500L38 8.500z" fill="#e8606a" />
          <path d="M44 14c0-6 3-9 8.500-9s8.500 3 8.500 9v14c0 2-1 3-3 3H47c-2 0-3-1-3-3z" fill="#1672e8" />
          <path d="M49 5.500c0-5.500 7-5.500 7 0" fill="none" stroke="#4150a8" strokeWidth="1.500" />
          <path d="M46 21c0-4 3-6 6.500-6s6.500 2 6.500 6v8H46z" fill="#1f8cff" stroke="#0a55c4" />
          <path d="M47.500 26h10v2h-10z" fill="#8a5cf0" />
          <path d="m6 2 1.200 2.800L10 6 7.200 7.200 6 10 4.800 7.200 2 6l2.800-1.200z" fill="#cf6ee4" />
          <circle cx="38" cy="17" r="1.500" fill="#58c4e8" />
          <circle cx="64.500" cy="7" r="1.800" fill="#f6b042" />
        </svg>
      </label>
      <Task label="タスク ビュー">
        <Icon w={15} h={15}>
          <path d="M0 1h10M0 14h10M1.500 4.500h7v6h-7zM12.500 0v15M14 4h-3v4h3" stroke="#e8e8e8" strokeWidth="1.400" />
        </Icon>
      </Task>
      <Task label="Microsoft Edge">
        <svg width="22" height="22" viewBox="0 0 22 22" aria-hidden="true">
          <defs>
            <linearGradient id="edgeTop" x1="0" x2="1" y1=".3" y2=".6">
              <stop offset="0" stopColor="#2bb5ea" />
              <stop offset="1" stopColor="#63d84c" />
            </linearGradient>
          </defs>
          <circle cx="11" cy="11" r="10.500" fill="#1672cf" />
          <path d="M.6 10C1.500 4 6 .5 11 .5c6 0 10.500 4 10.500 9 0 3.500-2.500 5.500-5.500 5.500-2.500 0-3.500-1-3-2 1.500-3-1-5.500-4.500-5.500-3 0-6 1-7.900 2.500z" fill="url(#edgeTop)" />
          <path d="M.6 11c1-3 4-4 6.500-3.500C4 10 5 17 10 19.500c3 1.300 6 .8 8-.5-5 5-17 3-17.400-8z" fill="#0f58a8" />
        </svg>
      </Task>
      <Task label="エクスプローラー" open>
        <svg width="20" height="18" viewBox="0 0 20 18" aria-hidden="true">
          <path d="M1 1h7l1.500 2H19v5H1z" fill="#e6a522" />
          <path d="M0 5h20v12H0z" fill="#fbd35d" />
          <path d="M3 17V11.500h14V17h-4v-2.500H7V17z" fill="#3c8fd8" />
        </svg>
      </Task>
      <Task label="Microsoft Store">
        <svg width="22" height="22" viewBox="0 0 22 22" aria-hidden="true">
          <path d="M6.500 6V1.500h9V6" fill="none" stroke="#36a8ea" strokeWidth="1.800" />
          <path d="M0 5h22v13a3 3 0 0 1-3 3H3a3 3 0 0 1-3-3z" fill="#f6f6f6" />
          <path d="M7 8.500h3.600v3.600H7z" fill="#f05030" />
          <path d="M11.400 8.500H15v3.600h-3.600z" fill="#7cba28" />
          <path d="M7 13h3.600v3.600H7z" fill="#1f9ce8" />
          <path d="M11.400 13H15v3.600h-3.600z" fill="#fcb813" />
        </svg>
      </Task>
      <Task label="コントロール パネル">
        <svg width="20" height="15" viewBox="0 0 20 15" aria-hidden="true">
          <path d="M0 0h20v15H0z" fill="#5cbcf0" />
          <path d="M1.500 1.500h17v12h-17z" fill="#8fd4f8" />
          <circle cx="6.500" cy="6" r="3.400" fill="#2b78c8" />
          <path d="M6.500 6V2.600A3.400 3.400 0 0 1 9.900 6z" fill="#fbd35d" />
          <path d="M12 4h5M12 6.500h5M12 9h5M3 11.500h8" stroke="#fff" strokeWidth="1.200" />
        </svg>
      </Task>
      <Task label="Snipping Tool">
        <svg width="20" height="22" viewBox="0 0 20 22" fill="none" aria-hidden="true">
          <path d="M3 3.500C8 .5 17 2 17 9.500c0 4-3 6-6 6.500" stroke="#d84a20" strokeWidth="3.200" />
          <path d="m8.500 3 1.500 12M12 3l-2 13" stroke="#e4e4e4" strokeWidth="2" />
          <circle cx="4.500" cy="17" r="2.600" stroke="#2a8ad8" strokeWidth="1.800" />
          <circle cx="12" cy="18.500" r="2.600" stroke="#2a8ad8" strokeWidth="1.800" />
        </svg>
      </Task>
      <Task label="Inkscape">
        <svg width="20" height="20" viewBox="0 0 20 20" aria-hidden="true">
          <path d="M10 .5 19.500 10c.5 1.500-2 2.500-4 2.500.5 1.500 2 1.500 1.500 2.500-1 1-3 .5-4 1.500 0 1.500-2 3-3 3s-3-1-2.500-2.500c-2-.5-4-1-4-2.500 1-.8 3-.5 3-1.500-2 0-6.500-1-6-3z" fill="#0a0a0a" stroke="#9aa4aa" strokeWidth=".5" />
          <path d="m10 1 5.500 5.500-2.500 1-2 2-2.500-2-2.500.5L4.500 6.500z" fill="#f2f2f2" />
          <path d="M10.500 10.500 17 8.500l2 2-3 1z" fill="#6a93c8" />
        </svg>
      </Task>
      <Task label="Excel" active>
        <svg width="21" height="19" viewBox="0 0 21 19" aria-hidden="true">
          <path d="M6 0h7.500v5H6z" fill="#21a366" />
          <path d="M13.500 0H20a1 1 0 0 1 1 1v4h-7.500z" fill="#33c481" />
          <path d="M6 5h7.500v9H6z" fill="#107c41" />
          <path d="M13.500 5H21v4.500h-7.500z" fill="#21a366" />
          <path d="M13.500 9.500H21V14h-7.500z" fill="#107c41" />
          <path d="M6 14h15v4a1 1 0 0 1-1 1H6z" fill="#185c37" />
          <path d="M0 4h11v11H0z" fill="#0f7038" />
          <path d="m3.300 6.500 4.400 6m0-6-4.400 6" stroke="#fff" strokeWidth="1.500" />
        </svg>
      </Task>
      <div className="ml-auto flex h-full items-center">
        <svg width="17" height="22" viewBox="0 0 17 22" aria-hidden="true">
          <path d="M1.500 0H12l5 5v15.500a1.500 1.500 0 0 1-1.500 1.500h-14A1.500 1.500 0 0 1 0 20.500v-19A1.500 1.500 0 0 1 1.500 0z" fill="#3fb0f0" />
          <path d="M12 0v5h5z" fill="#b8e2fb" />
          <path d="M3 15V10h2.500v5zM7 15v-3h2.500v3zM11 15V9.500h2.500V15z" fill="#1265b0" />
          <path d="M2 16.500h13M2 19h9" stroke="#dff2fd" strokeWidth="1.200" />
        </svg>
        <span className="ml-[9px] text-[12px] leading-4 whitespace-nowrap">今後の収益</span>
        <Icon w={11} h={7} className="ml-[15px]"><path d="M.5 6 5.500 1l5 5" stroke="#fff" strokeWidth="1.200" /></Icon>
        <Icon w={12} h={16} className="ml-[11px]">
          <path d="M3.500 1.500h5M3.500 14.500h5M2.500 4h5a2 2 0 0 1 2 2v4a2 2 0 0 1-2 2h-5a2 2 0 0 1-2-2V6a2 2 0 0 1 2-2zM9.500 7l2-1v4l-2-1" stroke="#fff" strokeWidth="1.200" />
          <circle cx="5" cy="8" r="1.800" stroke="#fff" />
        </Icon>
        <svg width="15" height="13" viewBox="0 0 15 13" className="ml-2" aria-hidden="true">
          <path d="M3 9a3 3 0 0 1 0-5c1-3 6-3.500 7-.5 2 0 3 1.500 3 3S12 9 11 9z" fill="#1a78d6" />
          <circle cx="10.500" cy="8.500" r="4.300" fill="#d9362e" />
          <path d="m9 7 3 3m0-3-3 3" stroke="#fff" strokeWidth="1.200" />
        </svg>
        <Icon w={15} h={12} className="ml-2">
          <path d="M3.500 4.500h10v6h-10zM14.500 6.500v2M1.500.5v2M3.500.5v2M.5 2.500h4v2h-4zM2.500 4.500v3" stroke="#fff" strokeWidth="1.200" />
          <path d="M5 6h7v3H5z" fill="#fff" stroke="none" />
        </Icon>
        <Icon w={13} h={13} className="ml-2">
          <path d="M1 9.500A9 9 0 0 1 10 .8M3.500 11A7 7 0 0 1 11 3.800M6 12a5 5 0 0 1 5.500-5M8.500 12.500a3 3 0 0 1 3-2.700" stroke="#e0e0e0" strokeWidth="1.200" />
        </Icon>
        <Icon w={16} h={13} className="ml-[6px]">
          <path d="M1 4.500h2.500L6.500 1.500v10l-3-3H1zM8.500 4.500c1 1 1 3 0 4M10.500 3c2 2 2 5 0 7M12.500 1.500c3 2.500 3 7.500 0 10" stroke="#fff" strokeWidth="1.100" />
        </Icon>
        <span className="ml-[6px] w-3 text-center text-[17px] leading-5">A</span>
        <time className="ml-[9px] w-[54px] text-center text-[10px] leading-4">
          5:26
          <br />
          2023/02/17
        </time>
        <button type="button" aria-label="通知" className="mr-[15px] ml-[15px]">
          <Icon w={16} h={16}>
            <path d="M1 1.500h14v10.500h-4.500L8 14.500 5.500 12H1z" stroke="#fff" strokeWidth="1.200" />
          </Icon>
        </button>
        <span className="mr-[5px] h-full w-px bg-[#5a666c]" />
      </div>
    </div>
  );
}

export default function App() {
  return (
    <div className="flex h-screen flex-col overflow-hidden bg-[#f3f2f1] font-['Noto_Sans','Noto_Sans_CJK_JP',sans-serif] [font-feature-settings:'palt']">
      <TitleBar />
      <MenuTabs />
      <Ribbon />
      <FormulaBar />
      <Worksheet />
      <SheetTabs />
      <StatusBar />
      <Taskbar />
    </div>
  );
}
